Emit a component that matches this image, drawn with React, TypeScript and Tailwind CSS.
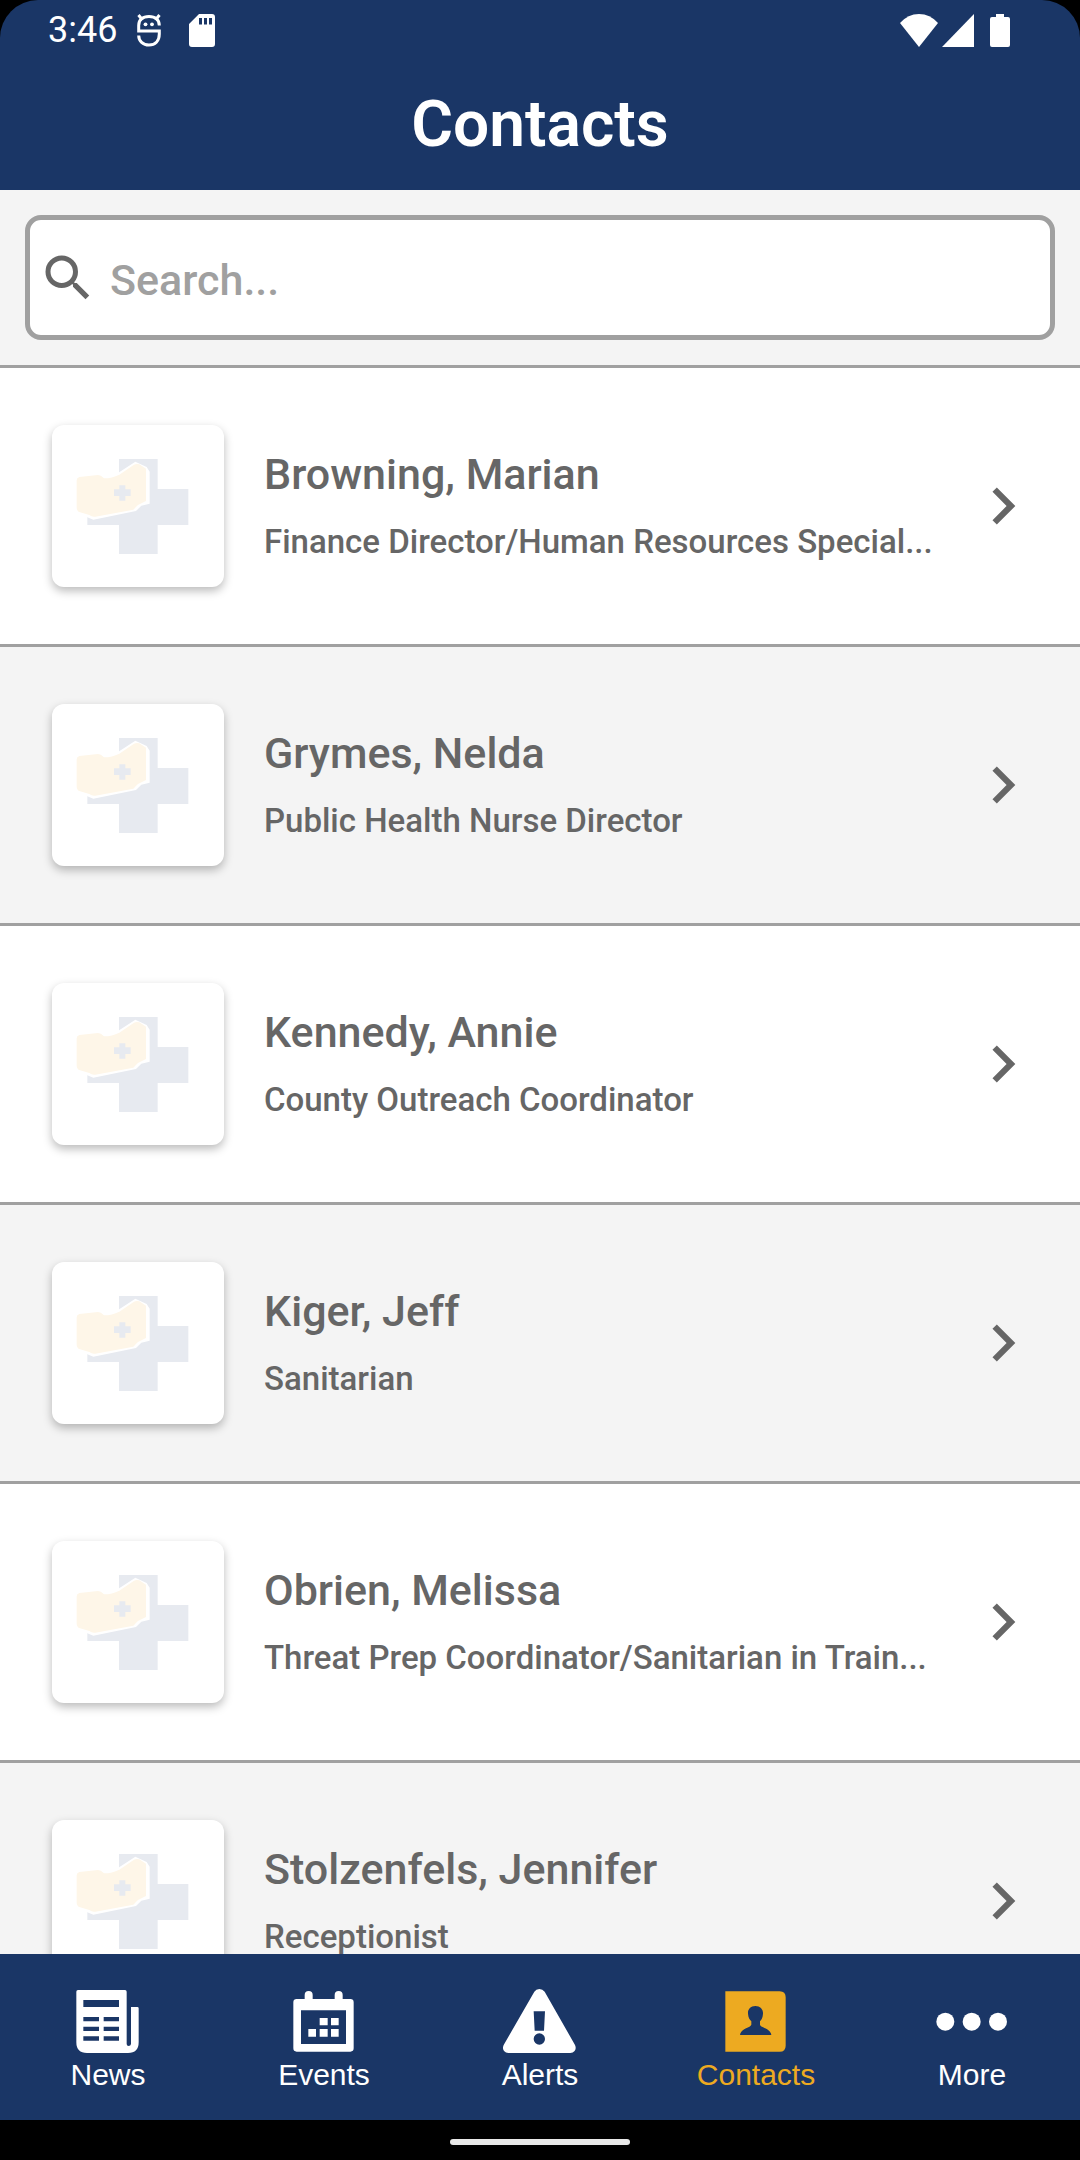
import { useState } from 'react'
import type { ReactNode } from 'react'
import { MdChevronRight, MdSearch } from 'react-icons/md'

type Contact = { name: string; title: string }

const contacts: Contact[] = [
  { name: 'Browning, Marian', title: 'Finance Director/Human Resources Special...' },
  { name: 'Grymes, Nelda', title: 'Public Health Nurse Director' },
  { name: 'Kennedy, Annie', title: 'County Outreach Coordinator' },
  { name: 'Kiger, Jeff', title: 'Sanitarian' },
  { name: 'Obrien, Melissa', title: 'Threat Prep Coordinator/Sanitarian in Train...' },
  { name: 'Stolzenfels, Jennifer', title: 'Receptionist' },
]

const StatusBar = () => (
  <div className="flex h-15 items-center justify-between pl-12 pr-[70px] text-4xl font-normal text-white">
    <div className="flex items-center">
      <span>3:46</span>
      {/* debug notification */}
      <svg viewBox="0 0 24 33" className="ml-5 h-[33px] w-6" fill="none" stroke="currentColor" strokeWidth="3">
        <path d="M22.300 11.500C22.300 6 18.500 2.500 12 2.500S1.700 6 1.700 11.500V17H22.300V20C22.300 27 18 31 12 31S1.700 27 1.700 21.500" />
        <path d="M1.500 1L5.500 6M22.500 1L18.500 6" />
        <circle cx="8.500" cy="10.300" r="1.900" fill="currentColor" stroke="none" />
        <circle cx="15" cy="10.300" r="1.900" fill="currentColor" stroke="none" />
      </svg>
      <svg viewBox="0 0 26 33" className="ml-7 h-[33px] w-[26px]" fill="currentColor">
        <path
          fillRule="evenodd"
          d="M10 0H23Q26 0 26 3V30Q26 33 23 33H3Q0 33 0 30V10ZM10 4V10.500H13V4ZM15 4V10.500H18V4ZM20 4V10.500H23V4Z"
        />
      </svg>
    </div>
    <div className="flex items-center">
      <svg viewBox="0 0 38 33" className="h-[33px] w-[38px]" fill="currentColor">
        <path d="M0 9Q8 0 19 0T38 9L19 33Z" />
      </svg>
      <svg viewBox="0 0 32 33" className="ml-1 h-[33px] w-8" fill="currentColor">
        <path d="M32 0V33H0Z" />
      </svg>
      <svg viewBox="0 0 20 33" className="ml-4 h-[33px] w-5" fill="currentColor">
        <path d="M6 0H14V3H18Q20 3 20 5V31Q20 33 18 33H2Q0 33 0 31V5Q0 3 2 3H6Z" />
      </svg>
    </div>
  </div>
)

const Thumbnail = () => (
  <svg
    viewBox="0 0 516 486"
    className="h-[162px] w-[172px] flex-shrink-0 rounded-xl bg-white shadow-[0_4px_10px_rgba(0,0,0,0.27)]"
    aria-hidden="true"
  >
    <path fill="#e7eaf0" d="M201 102H317V192H409V300H317V387H201V300H106V192H201Z" />
    <path
      fill="#fff"
      d="M74 157L142 146L158 155L198 144L250 110L284 126L293 140V236L268 242L252 258L124 284L84 268L74 250Z"
    />
    <path
      fill="#fef6e8"
      d="M74 166Q74 158 82 156L138 150Q146 150 156 160Q180 160 202 149L246 119Q254 115 262 118L282 131V228Q270 234 258 240Q250 248 244 254L130 275Q120 277 112 270L84 262Q74 258 74 248Z"
    />
    <path fill="#e7eaf0" d="M202 181H220V193H236V213H220V227H202V213H186V193H202Z" />
  </svg>
)

const ContactRow = ({ name, title }: Contact) => (
  <li className="border-b-3 border-[#a0a0a0] odd:bg-white even:bg-[#f4f4f4]">
    <button type="button" className="flex h-[276px] w-full items-center pl-13 pr-10 text-left">
      <Thumbnail />
      <span className="ml-10 flex min-w-0 flex-1 flex-col gap-5">
        <span className="truncate text-[43px] leading-[52px]">{name}</span>
        <span className="truncate text-[33px] leading-[44px]">{title}</span>
      </span>
      <MdChevronRight className="h-[74px] w-[74px] flex-shrink-0" />
    </button>
  </li>
)

const tabs: { label: string; icon: ReactNode }[] = [
  {
    label: 'News',
    icon: (
      <path
        fillRule="evenodd"
        d="M21 3H162Q167 3 167 8V165Q167 171 173 171T180 165V54H199Q203 54 203 58V160Q203 192 171 192H48Q16 192 16 160V8Q16 3 21 3ZM37 33V54H144V33ZM37 84V97H84V84ZM98 84V97H144V84ZM37 113V126H84V113ZM98 113V126H144V113ZM37 142V155H84V142ZM98 142V155H144V142Z"
      />
    ),
  },
  {
    label: 'Events',
    icon: (
      <path
        fillRule="evenodd"
        d="M53 30V18Q53 6 65 6T77 18V30H143V18Q143 6 155 6T167 18V30H190Q200 30 200 40V178Q200 188 190 188H29Q19 188 19 178V40Q19 30 29 30ZM42 64V165H177V64ZM98 87H122V109H98ZM132 87H155V109H132ZM64 120H87V143H64ZM98 120H122V143H98ZM132 120H155V143H132Z"
      />
    ),
  },
  {
    label: 'Alerts',
    icon: (
      <path
        fillRule="evenodd"
        d="M94 8Q99 0 109 0T125 8L216 168Q221 180 214 187Q210 192 202 192H16Q8 192 4 187Q-3 180 2 168ZM92 67L95 125H123L126 67ZM109 133A17 17 0 1 0 109 167A17 17 0 1 0 109 133Z"
      />
    ),
  },
  {
    label: 'Contacts',
    icon: (
      <path
        fillRule="evenodd"
        d="M19 7H182Q200 7 200 25V170Q200 188 182 188H19ZM109 51C94 51 86 62 87 74C88 86 92 92 97 97V107C94 117 66 117 63 138H157C154 117 126 117 123 107V97C128 92 131 86 132 74C133 62 124 51 109 51Z"
      />
    ),
  },
  {
    label: 'More',
    icon: (
      <>
        <circle cx="31" cy="98" r="27" />
        <circle cx="110" cy="98" r="27" />
        <circle cx="189" cy="98" r="27" />
      </>
    ),
  },
]

const TabBar = () => (
  <nav className="grid h-[166px] flex-shrink-0 grid-cols-5 bg-[#1a3666] font-['Liberation_Sans',sans-serif] text-[30px] leading-9">
    {tabs.map(({ label, icon }) => {
      const active = label === 'Contacts'
      return (
        <a
          key={label}
          href={`#${label.toLowerCase()}`}
          aria-current={active ? 'page' : undefined}
          className={`flex flex-col items-center gap-1 pt-[35px] ${active ? 'text-[#edaa21]' : 'text-white'}`}
        >
          <svg viewBox="0 0 222 192" className="h-16 w-[74px]" fill="currentColor" aria-hidden="true">
            {icon}
          </svg>
          {label}
        </a>
      )
    })}
  </nav>
)

export default function App() {
  const [query, setQuery] = useState('')
  const shown = contacts.filter((c) => c.name.toLowerCase().includes(query.toLowerCase()))

  return (
    <div className="flex h-screen flex-col bg-black font-['Roboto',sans-serif] font-medium text-[#666666]">
      <header className="h-[190px] flex-shrink-0 rounded-t-[38px] bg-[#1a3666]">
        <StatusBar />
        <h1 className="text-center text-[64px] font-semibold leading-[130px] text-white">Contacts</h1>
      </header>
      <div className="flex-shrink-0 border-b-3 border-[#a0a0a0] bg-[#f4f4f4] p-[25px]">
        <label className="flex h-[125px] items-center rounded-2xl border-5 border-[#a0a0a0] bg-white pl-2">
          <MdSearch className="h-15 w-15 flex-shrink-0" />
          <input
            type="text"
            aria-label="Search contacts"
            placeholder="Search..."
            value={query}
            onChange={(e) => setQuery(e.target.value)}
            className="ml-3 min-w-0 flex-1 pt-1 text-[43px] leading-[60px] outline-none placeholder:text-[#a0a0a0]"
          />
        </label>
      </div>
      <main className="min-h-0 flex-1 overflow-y-auto bg-white [scrollbar-width:none]">
        <ul>
          {shown.map((c) => (
            <ContactRow key={c.name} {...c} />
          ))}
        </ul>
      </main>
      <TabBar />
      <div className="flex h-10 flex-shrink-0 items-center justify-center pt-1">
        <div className="h-1.5 w-45 rounded-full bg-[#e8e8e8]" />
      </div>
    </div>
  )
}
